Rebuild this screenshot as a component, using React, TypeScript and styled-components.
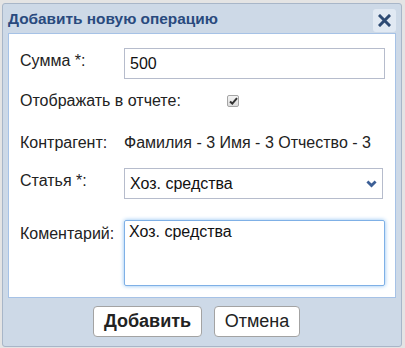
import React from 'react';
import styled, { createGlobalStyle } from 'styled-components';

const GlobalStyle = createGlobalStyle`
  html, body {
    margin: 0;
    padding: 0;
    background: #e4e4e4;
  }
  body {
    font-family: "Liberation Sans", Arial, sans-serif;
  }
`;

const Page = styled.div`
  width: 405px;
  height: 348px;
  box-sizing: border-box;
  padding: 3px 3px 1px 2px;
`;

const Dialog = styled.div`
  width: 400px;
  height: 344px;
  box-sizing: border-box;
  background: #cdd9e7;
  border: 1px solid #a8b6c8;
  border-radius: 3px;
  display: flex;
  flex-direction: column;
`;

const TitleBar = styled.div`
  height: 29px;
  display: flex;
  align-items: center;
  justify-content: space-between;
  padding: 0 5px;
`;

const Title = styled.div`
  font-size: 15.4px;
  font-weight: bold;
  color: #294a7e;
`;

const CloseButton = styled.div`
  width: 23px;
  height: 23px;
  border-radius: 3px;
  background: #e1e9f3;
  display: flex;
  align-items: center;
  justify-content: center;
  margin-top: 4px;
`;

const Panel = styled.div`
  margin: 0 5px;
  background: #ffffff;
  border: 1px solid #a6c2e6;
  padding: 14px 10px 11px 11px;
`;

const Row = styled.div<{ $gap: number; $h: number }>`
  display: flex;
  align-items: ${({ $h }) => ($h > 25 ? 'flex-start' : 'center')};
  margin-top: ${({ $gap }) => $gap}px;
  min-height: ${({ $h }) => $h}px;
  font-size: 16px;
  color: #222;
`;

const Label = styled.div<{ $top?: number }>`
  width: 104px;
  flex: none;
  white-space: nowrap;
  padding-top: ${({ $top }) => $top ?? 0}px;
  line-height: 18px;
`;

const TextInput = styled.div`
  flex: 1;
  height: 31px;
  box-sizing: border-box;
  border: 1px solid #b6bccc;
  padding: 0 5px;
  display: flex;
  align-items: center;
  font-size: 16px;
  color: #111;
`;

const Select = styled(TextInput)`
  justify-content: space-between;
  margin-right: 2px;
  padding-right: 5px;
`;

const TextArea = styled.div`
  flex: 1;
  height: 66px;
  box-sizing: border-box;
  border: 1px solid #7fb0e6;
  box-shadow: 0 0 4px #8cc0f2;
  border-radius: 2px;
  padding: 2px 4px;
  font-size: 16px;
  line-height: 18px;
  color: #111;
`;

const Check = styled.span`
  width: 12px;
  height: 12px;
  margin-left: 103px;
  box-sizing: border-box;
  border: 1px solid #a5a5a5;
  border-radius: 2px;
  background: linear-gradient(#f4f4f4, #dcdcdc);
  display: flex;
  align-items: center;
  justify-content: center;
`;

const Value = styled.div`
  font-size: 16px;
  color: #222;
`;

const Footer = styled.div`
  flex: 1;
  display: flex;
  align-items: center;
  justify-content: center;
  gap: 12px;
  padding-right: 11px;
  padding-bottom: 1px;
`;

const Button = styled.button<{ $primary?: boolean }>`
  height: 31px;
  width: ${({ $primary }) => ($primary ? 109 : 86)}px;
  background: #ffffff;
  border: 1px solid #a3a3a3;
  border-radius: 4px;
  font-family: "Liberation Sans", Arial, sans-serif;
  font-size: 18px;
  font-weight: ${({ $primary }) => ($primary ? 'bold' : 'normal')};
  color: #222;
  padding: 0;
`;

export default function App() {
  return (
    <Page>
      <GlobalStyle />
      <Dialog>
        <TitleBar>
          <Title>Добавить новую операцию</Title>
          <CloseButton>
            <svg width="13" height="13" viewBox="0 0 13 13">
              <path d="M2 2 L11 11 M11 2 L2 11" stroke="#2d4a73" strokeWidth="3" strokeLinecap="square" />
            </svg>
          </CloseButton>
        </TitleBar>
        <Panel>
          <Row $gap={0} $h={31}>
            <Label $top={4}>Сумма *:</Label>
            <TextInput>500</TextInput>
          </Row>
          <Row $gap={11} $h={22}>
            <Label>Отображать в отчете:</Label>
            <Check>
              <svg width="9" height="8" viewBox="0 0 9 8">
                <path d="M1 4.5 L3.3 6.6 L8 1.2" fill="none" stroke="#333" strokeWidth="2" />
              </svg>
            </Check>
          </Row>
          <Row $gap={20} $h={22}>
            <Label>Контрагент:</Label>
            <Value>Фамилия - 3 Имя - 3 Отчество - 3</Value>
          </Row>
          <Row $gap={14} $h={31}>
            <Label $top={4}>Статья *:</Label>
            <Select>
              <span>Хоз. средства</span>
              <svg width="11" height="8" viewBox="0 0 11 8">
                <path d="M1.4 1.6 L5.5 5.6 L9.6 1.6" fill="none" stroke="#3c5f96" strokeWidth="2.8" />
              </svg>
            </Select>
          </Row>
          <Row $gap={21} $h={66}>
            <Label $top={5}>Коментарий:</Label>
            <TextArea>Хоз. средства</TextArea>
          </Row>
        </Panel>
        <Footer>
          <Button $primary>Добавить</Button>
          <Button>Отмена</Button>
        </Footer>
      </Dialog>
    </Page>
  );
}
